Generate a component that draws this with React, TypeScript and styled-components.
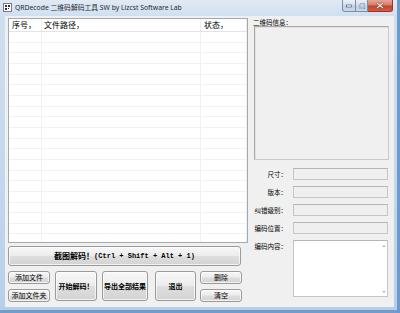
import React from "react";
import styled, { createGlobalStyle } from "styled-components";

const Global = createGlobalStyle`
  html, body { margin: 0; padding: 0; width: 400px; height: 313px; overflow: hidden; background: #fff; }
  * { box-sizing: border-box; }
`;

const CJK = `"Noto Sans CJK SC", "Noto Sans", sans-serif`;

const Window = styled.div`
  width: 400px;
  height: 313px;
  display: flex;
  flex-direction: column;
  background: linear-gradient(to bottom, #e1eaf4 0px, #d0dfef 16px, #c3d7ec 60%, #b6cfe9 100%);
  box-shadow: inset -3px 0 0 #6b9ad0, inset 0 -3px 0 #6f9dd1;
  overflow: hidden;
  font-family: ${CJK};
  color: #000;
`;

const TitleBar = styled.div`
  height: 16px;
  display: flex;
  align-items: flex-start;
  flex-shrink: 0;
`;

const AppIcon = styled.svg`
  width: 9px;
  height: 9px;
  margin: 3px 0 0 3px;
`;

const TitleText = styled.div`
  margin: 3px 0 0 3px;
  font-family: "Noto Sans", "Noto Sans CJK SC", sans-serif;
  font-size: 6.8px;
  line-height: 9px;
  color: #1e2a36;
  white-space: nowrap;
`;

const Controls = styled.div`
  margin-left: auto;
  margin-right: 7px;
  display: flex;
`;

const CtrlBtn = styled.div<{ $close?: boolean; $w: number }>`
  width: ${(p) => p.$w}px;
  height: 12px;
  display: flex;
  align-items: center;
  justify-content: center;
  border: 1px solid ${(p) => (p.$close ? "#8a3a2e" : "#7c8ea6")};
  border-top: none;
  background: ${(p) =>
    p.$close
      ? "linear-gradient(to bottom, #e8a598 0%, #d87a66 45%, #c4442f 55%, #d65a44 100%)"
      : "linear-gradient(to bottom, #e9f0f8 0%, #d4e0ee 45%, #bccde2 55%, #cbdaeb 100%)"};
  border-radius: ${(p) => (p.$close ? "0 0 3px 0" : "0")};
  &:first-child { border-radius: 0 0 0 3px; }
  & + & { border-left: none; }
`;

const Client = styled.div`
  flex: 1;
  margin: 0 6px 6px 5px;
  background: #f0f0f0;
  display: flex;
  padding: 2px 5px 3px 3px;
  gap: 5px;
`;

const LeftCol = styled.div`
  width: 240px;
  display: flex;
  flex-direction: column;
`;

const List = styled.div`
  height: 225px;
  border: 1px solid #a3a9b1;
  background: #fff;
  display: flex;
  flex-direction: column;
  overflow: hidden;
`;

const HeaderRow = styled.div`
  display: grid;
  grid-template-columns: 33px 159px 1fr;
  height: 13px;
  border-bottom: 1px solid #e2e4e8;
  flex-shrink: 0;
`;

const HeaderCell = styled.div<{ $pad: number }>`
  font-size: 8px;
  line-height: 12px;
  padding-left: ${(p) => p.$pad}px;
  border-right: 1px solid #eceef1;
  white-space: nowrap;
`;

const Row = styled.div`
  display: grid;
  grid-template-columns: 33px 159px 1fr;
  height: 10.67px;
  flex-shrink: 0;
`;

const Cell = styled.div`
  border-right: 1px solid #f1f1f1;
  border-bottom: 1px solid #f1f1f1;
`;

const Button = styled.button<{ $bold?: boolean }>`
  font-family: ${CJK};
  font-size: 7px;
  font-weight: ${(p) => (p.$bold ? 700 : 400)};
  color: #000;
  padding: 0;
  border: 1px solid #9a9a9a;
  border-radius: 3px;
  background: linear-gradient(to bottom, #f7f7f7 0%, #ececec 48%, #dedede 52%, #d3d3d3 100%);
  box-shadow: inset 0 0 0 1px rgba(255, 255, 255, 0.7);
  display: flex;
  align-items: center;
  justify-content: center;
  white-space: nowrap;
  line-height: 1;
`;

const BigButton = styled(Button)`
  width: 233px;
  height: 20px;
  margin-top: 3px;
  font-size: 8px;
`;

const Mono = styled.span`
  font-family: "Liberation Mono", monospace;
  font-size: 7px;
  font-weight: 700;
`;

const BottomRow = styled.div`
  margin-top: 5px;
  height: 31px;
  display: flex;
`;

const Stack = styled.div<{ $w: number; $ml: number }>`
  width: ${(p) => p.$w}px;
  margin-left: ${(p) => p.$ml}px;
  display: flex;
  flex-direction: column;
  justify-content: space-between;
`;

const SmallButton = styled(Button)`
  height: 13px;
`;

const TallButton = styled(Button)<{ $w: number; $ml: number }>`
  width: ${(p) => p.$w}px;
  margin-left: ${(p) => p.$ml}px;
  height: 30px;
`;

const RightCol = styled.div`
  flex: 1;
  display: flex;
  flex-direction: column;
`;

const GroupLabel = styled.div`
  font-size: 6.5px;
  line-height: 8px;
  height: 8px;
  white-space: nowrap;
`;

const QrBox = styled.div`
  margin: 0 0 0 1px;
  height: 134px;
  border: 1px solid #c9c9c9;
  border-top-color: #a9a9a9;
  border-left-color: #a9a9a9;
  box-shadow: inset 1px 1px 0 #e2e2e2;
  background: #f0f0f0;
`;

const Fields = styled.div`
  margin-top: 8px;
  display: flex;
  flex-direction: column;
  gap: 6px;
`;

const FieldRow = styled.div`
  display: flex;
  align-items: flex-start;
`;

const FieldLabel = styled.div`
  width: 34px;
  text-align: right;
  font-size: 6.5px;
  line-height: 12px;
  white-space: nowrap;
`;

const Input = styled.div`
  margin-left: 6px;
  width: 95px;
  height: 12px;
  border: 1px solid #c6c6c6;
  border-top-color: #b5b5b5;
  background: #efefef;
`;

const TextArea = styled.div`
  margin-left: 6px;
  width: 95px;
  height: 57px;
  border: 1px solid #c6c6c6;
  border-top-color: #b5b5b5;
  background: #fff;
  display: flex;
  justify-content: flex-end;
`;

const ScrollTrack = styled.div`
  width: 7px;
  display: flex;
  flex-direction: column;
  justify-content: space-between;
  align-items: center;
  padding: 4px 0 3px;
`;

const Arrow = styled.div<{ $up?: boolean }>`
  width: 0;
  height: 0;
  border-left: 2px solid transparent;
  border-right: 2px solid transparent;
  ${(p) => (p.$up ? "border-bottom: 2px solid #b8b8b8;" : "border-top: 2px solid #b8b8b8;")}
`;

const rows = Array.from({ length: 20 }, (_, i) => i);

export default function App() {
  return (
    <>
      <Global />
      <Window>
        <TitleBar>
          <AppIcon viewBox="0 0 9 9">
            <rect x="0.5" y="0.5" width="8" height="8" fill="#fff" stroke="#6e7c8c" strokeWidth="1" />
            <rect x="2" y="2" width="2" height="2" fill="#333" />
            <rect x="5" y="2" width="2" height="2" fill="#333" />
            <rect x="2" y="5" width="2" height="2" fill="#333" />
            <rect x="5" y="5" width="1" height="1" fill="#333" />
          </AppIcon>
          <TitleText>QRDecode 二维码解码工具 SW by Lizcst Software Lab</TitleText>
          <Controls>
            <CtrlBtn $w={14}>
              <svg width="6" height="4" viewBox="0 0 6 4">
                <rect x="0.5" y="1" width="5" height="2" fill="#fff" stroke="#3b4a5e" strokeWidth="0.6" />
              </svg>
            </CtrlBtn>
            <CtrlBtn $w={12}>
              <svg width="6" height="6" viewBox="0 0 6 6">
                <rect x="0.5" y="0.5" width="5" height="5" fill="none" stroke="#3b4a5e" strokeWidth="1.2" />
                <rect x="0.5" y="0.5" width="5" height="5" fill="none" stroke="#fff" strokeWidth="0.6" />
              </svg>
            </CtrlBtn>
            <CtrlBtn $w={25} $close>
              <svg width="8" height="7" viewBox="0 0 8 7">
                <path d="M1 1 L7 6 M7 1 L1 6" stroke="#5a1d14" strokeWidth="2.2" />
                <path d="M1 1 L7 6 M7 1 L1 6" stroke="#fff" strokeWidth="1.2" />
              </svg>
            </CtrlBtn>
          </Controls>
        </TitleBar>
        <Client>
          <LeftCol>
            <List>
              <HeaderRow>
                <HeaderCell $pad={3}>序号，</HeaderCell>
                <HeaderCell $pad={2}>文件路径，</HeaderCell>
                <HeaderCell $pad={3}>状态，</HeaderCell>
              </HeaderRow>
              {rows.map((r) => (
                <Row key={r}>
                  <Cell />
                  <Cell />
                  <Cell />
                </Row>
              ))}
            </List>
            <BigButton $bold>
              截图解码！<Mono>(Ctrl + Shift + Alt + 1)</Mono>
            </BigButton>
            <BottomRow>
              <Stack $w={42} $ml={0}>
                <SmallButton>添加文件</SmallButton>
                <SmallButton>添加文件夹</SmallButton>
              </Stack>
              <TallButton $bold $w={42} $ml={5}>开始解码！</TallButton>
              <TallButton $bold $w={46} $ml={5}>导出全部结果</TallButton>
              <TallButton $bold $w={41} $ml={7}>退出</TallButton>
              <Stack $w={42} $ml={4}>
                <SmallButton>删除</SmallButton>
                <SmallButton>清空</SmallButton>
              </Stack>
            </BottomRow>
          </LeftCol>
          <RightCol>
            <GroupLabel>二维码信息：</GroupLabel>
            <QrBox />
            <Fields>
              <FieldRow>
                <FieldLabel>尺寸：</FieldLabel>
                <Input />
              </FieldRow>
              <FieldRow>
                <FieldLabel>版本：</FieldLabel>
                <Input />
              </FieldRow>
              <FieldRow>
                <FieldLabel>纠错级别：</FieldLabel>
                <Input />
              </FieldRow>
              <FieldRow>
                <FieldLabel>编码位置：</FieldLabel>
                <Input />
              </FieldRow>
              <FieldRow>
                <FieldLabel>编码内容：</FieldLabel>
                <TextArea>
                  <ScrollTrack>
                    <Arrow $up />
                    <Arrow />
                  </ScrollTrack>
                </TextArea>
              </FieldRow>
            </Fields>
          </RightCol>
        </Client>
      </Window>
    </>
  );
}
